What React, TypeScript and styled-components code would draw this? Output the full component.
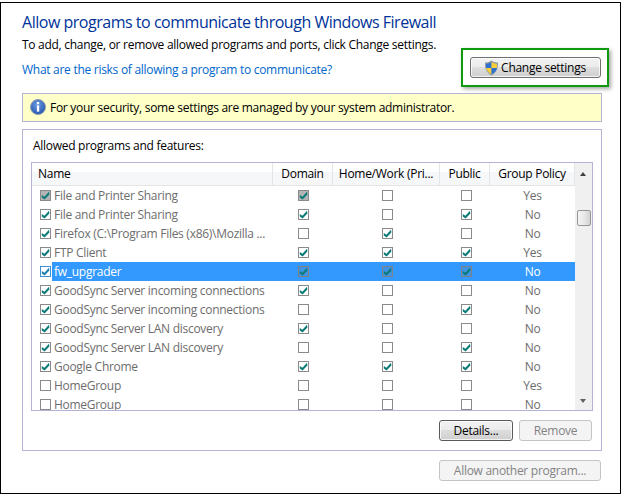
import React from "react";
import styled, { createGlobalStyle } from "styled-components";

const GlobalStyle = createGlobalStyle`
  html, body {
    margin: 0;
    padding: 0;
    background: #fff;
  }
  body {
    font-family: "Open Sans", "Noto Sans", sans-serif;
    font-size: 12px;
    letter-spacing: -0.28px;
    color: #000;
  }
`;

const Frame = styled.div`
  box-sizing: border-box;
  width: 621px;
  height: 492px;
  margin-top: 2px;
  border: 1px solid #000;
  padding: 0 18px 0 21px;
  overflow: hidden;
`;

const Header = styled.div`
  display: flex;
  justify-content: space-between;
  height: 90px;
`;

const HeaderText = styled.div`
  padding-top: 8px;
`;

const Title = styled.div`
  font-size: 16px;
  line-height: 22px;
  letter-spacing: -0.48px;
  color: #003399;
  white-space: nowrap;
`;

const Intro = styled.div`
  margin-top: 3px;
  line-height: 17px;
  white-space: nowrap;
`;

const RiskLink = styled.a`
  display: block;
  margin-top: 8px;
  line-height: 17px;
  color: #0066cc;
  white-space: nowrap;
`;

const Highlight = styled.div`
  box-sizing: border-box;
  display: flex;
  align-items: center;
  justify-content: center;
  width: 148px;
  height: 39px;
  margin: 45px -7px 0 0;
  border: 2px solid #0f990f;
  box-shadow: 2px 2px 4px rgba(0, 0, 0, 0.35);
`;

const Button = styled.div<{ $width: number; $disabled?: boolean; $focused?: boolean }>`
  box-sizing: border-box;
  display: flex;
  align-items: center;
  justify-content: center;
  gap: 2px;
  width: ${(p) => p.$width}px;
  height: 21px;
  border-radius: 3px;
  border: 1px solid ${(p) => (p.$disabled ? "#c4c4c4" : p.$focused ? "#5a5a5a" : "#707070")};
  background: ${(p) =>
    p.$disabled
      ? "#f4f4f4"
      : "linear-gradient(to bottom, #f2f2f2 0%, #ebebeb 48%, #dddddd 50%, #cfcfcf 100%)"};
  box-shadow: inset 0 0 0 1px ${(p) => (p.$disabled ? "#f4f4f4" : "rgba(255,255,255,0.75)")};
  color: ${(p) => (p.$disabled ? "#838383" : "#000")};
  white-space: nowrap;
`;

const Notice = styled.div`
  box-sizing: border-box;
  display: flex;
  align-items: center;
  gap: 4px;
  width: 580px;
  height: 29px;
  padding: 0 0 1px 7px;
  border: 1px solid #b4b4d8;
  background: #ffffc8;
`;

const Group = styled.div`
  box-sizing: border-box;
  width: 580px;
  height: 322px;
  margin-top: 7px;
  padding: 7px 9px 0 8px;
  border: 1px solid #b4b4d8;
`;

const GroupLabel = styled.div`
  line-height: 17px;
  margin-left: 2px;
  height: 25px;
`;

const List = styled.div`
  box-sizing: border-box;
  display: flex;
  width: 562px;
  height: 249px;
  border: 1px solid #b4b4d8;
  overflow: hidden;
`;

const ListMain = styled.div`
  width: 543px;
  overflow: hidden;
`;

const COLUMNS = "241px 60px 107px 50px 85px";

const HeadRow = styled.div`
  display: grid;
  grid-template-columns: ${COLUMNS};
  height: 22px;
  border-bottom: 1px solid #e5e5e5;
  background: linear-gradient(to bottom, #ffffff 0%, #ffffff 40%, #f6f7f9 42%, #f6f7f9 100%);
`;

const HeadCell = styled.div<{ $left?: boolean }>`
  display: flex;
  align-items: center;
  justify-content: ${(p) => (p.$left ? "flex-start" : "center")};
  padding: 0 0 2px ${(p) => (p.$left ? "6px" : "0")};
  border-right: 1px solid #e3e5e7;
  box-sizing: border-box;
  white-space: nowrap;
`;

const Row = styled.div`
  display: grid;
  grid-template-columns: ${COLUMNS};
  height: 19px;
  align-items: center;
`;

const NameCell = styled.div`
  display: flex;
  align-items: center;
  height: 19px;
  padding-left: 8px;
`;

const NameText = styled.div<{ $selected?: boolean }>`
  display: flex;
  align-items: center;
  flex: 1;
  height: 19px;
  margin-left: 1px;
  padding-left: 2px;
  white-space: nowrap;
  color: ${(p) => (p.$selected ? "#fff" : "#6d6d6d")};
  background: ${(p) => (p.$selected ? "#3399ff" : "transparent")};
`;

const Cell = styled.div<{ $selected?: boolean; $nudge?: number }>`
  box-sizing: border-box;
  display: flex;
  align-items: center;
  justify-content: center;
  height: 19px;
  padding-left: ${(p) => p.$nudge ?? 0}px;
  color: ${(p) => (p.$selected ? "#fff" : "#6d6d6d")};
  background: ${(p) => (p.$selected ? "#3399ff" : "transparent")};
`;

const Box = styled.div<{ $fill: string; $edge: string }>`
  box-sizing: border-box;
  display: flex;
  align-items: center;
  justify-content: center;
  width: 11px;
  height: 11px;
  border: 1px solid ${(p) => p.$edge};
  background: ${(p) => p.$fill};
`;

const Scrollbar = styled.div`
  position: relative;
  width: 17px;
  background: #f0f0f0;
`;

const ArrowUp = styled.div`
  position: absolute;
  top: 9px;
  left: 5px;
  width: 0;
  height: 0;
  border-left: 3.5px solid transparent;
  border-right: 3.5px solid transparent;
  border-bottom: 4px solid #404040;
`;

const ArrowDown = styled.div`
  position: absolute;
  bottom: 7px;
  left: 5px;
  width: 0;
  height: 0;
  border-left: 3.5px solid transparent;
  border-right: 3.5px solid transparent;
  border-top: 4px solid #606060;
`;

const Thumb = styled.div`
  position: absolute;
  top: 47px;
  left: 2px;
  box-sizing: border-box;
  width: 14px;
  height: 16px;
  border: 1px solid #979797;
  border-radius: 2px;
  background: linear-gradient(to right, #f4f4f4, #e8e8e8 50%, #d2d2d2);
`;

const ButtonRow = styled.div`
  display: flex;
  gap: 6px;
  justify-content: flex-end;
  margin: 9px 0 0;
`;

const FooterRow = styled.div`
  display: flex;
  justify-content: flex-end;
  width: 579px;
  margin-top: 9px;
`;

type Mode = "normal" | "dim" | "selected" | "focus";

const BOX_STYLES: Record<Mode, { fill: string; edge: string; tick: string }> = {
  normal: { fill: "#fff", edge: "#8a8a8a", tick: "#0b7b78" },
  dim: { fill: "#b4b4b4", edge: "#8a8a8a", tick: "#0b7b78" },
  selected: { fill: "#3f93e0", edge: "#7d8288", tick: "#0b7b78" },
  focus: { fill: "#fff", edge: "#3f8fd6", tick: "#1c7fb4" },
};

function Check({ on, mode = "normal" }: { on: boolean; mode?: Mode }): JSX.Element {
  const look = BOX_STYLES[mode];
  return (
    <Box $fill={look.fill} $edge={look.edge}>
      {on && (
        <svg width="9" height="9" viewBox="0 0 9 9">
          <path d="M0.8 4 L3.4 5.8 L8 0.8 L8.4 3.6 L3.6 8.6 L0.8 6.4 Z" fill={look.tick} />
        </svg>
      )}
    </Box>
  );
}

function ShieldIcon(): JSX.Element {
  return (
    <svg width="15" height="16" viewBox="0 0 15 16">
      <path d="M7.5 0.5 C9.5 2 11.5 2.6 14 2.6 C14.4 8 12.5 13 7.5 15.5 C2.5 13 0.6 8 1 2.6 C3.5 2.6 5.5 2 7.5 0.5 Z" fill="#8d97a3" />
      <path d="M7.5 2 L7.5 8 L2.1 8 C2 6.2 2 5 2.1 3.8 C4 3.7 5.8 3.1 7.5 2 Z" fill="#2f6fd0" />
      <path d="M7.5 2 C9.2 3.1 11 3.7 12.9 3.8 C13 5 13 6.2 12.9 8 L7.5 8 Z" fill="#f6cf3a" />
      <path d="M2.1 8 L7.5 8 L7.5 14.2 C4.4 12.6 2.6 10.6 2.1 8 Z" fill="#f6cf3a" />
      <path d="M7.5 8 L12.9 8 C12.4 10.6 10.6 12.6 7.5 14.2 Z" fill="#2f6fd0" />
    </svg>
  );
}

function InfoIcon(): JSX.Element {
  return (
    <svg width="16" height="16" viewBox="0 0 16 16">
      <defs>
        <radialGradient id="infoFill" cx="45%" cy="35%" r="70%">
          <stop offset="0%" stopColor="#6f9fe6" />
          <stop offset="100%" stopColor="#1f4fa8" />
        </radialGradient>
      </defs>
      <circle cx="8" cy="8" r="7.5" fill="url(#infoFill)" stroke="#8e9cb4" />
      <rect x="6.9" y="3" width="2.3" height="2.2" fill="#fff" />
      <rect x="6.9" y="6.4" width="2.3" height="6.2" fill="#fff" />
    </svg>
  );
}

type Program = {
  name: string;
  enabled: boolean;
  domain: boolean;
  home: boolean;
  pub: boolean;
  policy: string;
  dim?: boolean;
  selected?: boolean;
};

const PROGRAMS: Program[] = [
  { name: "File and Printer Sharing", enabled: true, domain: true, home: false, pub: false, policy: "Yes", dim: true },
  { name: "File and Printer Sharing", enabled: true, domain: true, home: false, pub: true, policy: "No" },
  { name: "Firefox (C:\\Program Files (x86)\\Mozilla ...", enabled: true, domain: false, home: true, pub: false, policy: "No" },
  { name: "FTP Client", enabled: true, domain: true, home: true, pub: true, policy: "Yes" },
  { name: "fw_upgrader", enabled: true, domain: true, home: true, pub: true, policy: "No", selected: true },
  { name: "GoodSync Server incoming connections", enabled: true, domain: true, home: false, pub: false, policy: "No" },
  { name: "GoodSync Server incoming connections", enabled: true, domain: false, home: false, pub: true, policy: "No" },
  { name: "GoodSync Server LAN discovery", enabled: true, domain: true, home: false, pub: false, policy: "No" },
  { name: "GoodSync Server LAN discovery", enabled: true, domain: false, home: false, pub: true, policy: "No" },
  { name: "Google Chrome", enabled: true, domain: true, home: true, pub: true, policy: "No" },
  { name: "HomeGroup", enabled: false, domain: false, home: false, pub: false, policy: "Yes" },
  { name: "HomeGroup", enabled: false, domain: false, home: false, pub: false, policy: "No" },
];

function ProgramRow({ program }: { program: Program }): JSX.Element {
  const { selected, dim } = program;
  const nameMode: Mode = selected ? "focus" : dim ? "dim" : "normal";
  const domainMode: Mode = selected ? "selected" : dim ? "dim" : "normal";
  const otherMode: Mode = selected ? "selected" : "normal";
  return (
    <Row>
      <NameCell>
        <Check on={program.enabled} mode={nameMode} />
        <NameText $selected={selected}>{program.name}</NameText>
      </NameCell>
      <Cell $selected={selected}>
        <Check on={program.domain} mode={domainMode} />
      </Cell>
      <Cell $selected={selected} $nudge={2}>
        <Check on={program.home} mode={otherMode} />
      </Cell>
      <Cell $selected={selected} $nudge={2}>
        <Check on={program.pub} mode={otherMode} />
      </Cell>
      <Cell $selected={selected}>{program.policy}</Cell>
    </Row>
  );
}

export default function App(): JSX.Element {
  return (
    <>
      <GlobalStyle />
      <Frame>
        <Header>
          <HeaderText>
            <Title>Allow programs to communicate through Windows Firewall</Title>
            <Intro>To add, change, or remove allowed programs and ports, click Change settings.</Intro>
            <RiskLink>What are the risks of allowing a program to communicate?</RiskLink>
          </HeaderText>
          <Highlight>
            <Button $width={131}>
              <ShieldIcon />
              Change settings
            </Button>
          </Highlight>
        </Header>
        <Notice>
          <InfoIcon />
          For your security, some settings are managed by your system administrator.
        </Notice>
        <Group>
          <GroupLabel>Allowed programs and features:</GroupLabel>
          <List>
            <ListMain>
              <HeadRow>
                <HeadCell $left>Name</HeadCell>
                <HeadCell>Domain</HeadCell>
                <HeadCell>Home/Work (Pri...</HeadCell>
                <HeadCell>Public</HeadCell>
                <HeadCell>Group Policy</HeadCell>
              </HeadRow>
              {PROGRAMS.map((program, i) => (
                <ProgramRow key={i} program={program} />
              ))}
            </ListMain>
            <Scrollbar>
              <ArrowUp />
              <Thumb />
              <ArrowDown />
            </Scrollbar>
          </List>
          <ButtonRow>
            <Button $width={74} $focused>
              Details...
            </Button>
            <Button $width={73} $disabled>
              Remove
            </Button>
          </ButtonRow>
        </Group>
        <FooterRow>
          <Button $width={162} $disabled>
            Allow another program...
          </Button>
        </FooterRow>
      </Frame>
    </>
  );
}
